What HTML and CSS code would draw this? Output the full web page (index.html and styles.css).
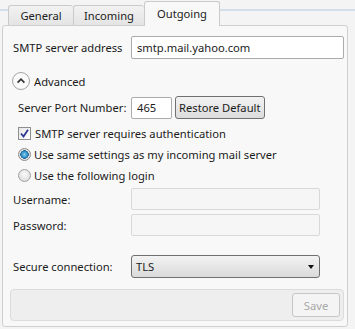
FILE: index.html
```html
<!DOCTYPE html>
<html lang="en">
<head>
    <meta charset="UTF-8">
    <meta name="viewport" content="width=device-width, initial-scale=1.0">
    <title>Outgoing mail settings</title>
    <link rel="stylesheet" href="styles.css">
</head>
<body>
    <div class="tabs">
        <div class="tab general">General</div>
        <div class="tab incoming">Incoming</div>
        <div class="tab active">Outgoing</div>
    </div>
    <div class="panel">
        <div class="row">
            <label class="label">SMTP server address</label>
            <input class="field wide" type="text" value="smtp.mail.yahoo.com">
        </div>

        <div class="advanced">
            <span class="toggle">
                <svg width="18" height="18" viewBox="0 0 18 18">
                    <circle cx="9" cy="9" r="8.5" fill="#fafafa" stroke="#a3a3a3"/>
                    <path d="M5.6 10.6 L9 7.2 L12.4 10.6" fill="none" stroke="#333" stroke-width="1.7"/>
                </svg>
            </span>
            Advanced
        </div>

        <div class="row indent">
            <label class="label">Server Port Number:</label>
            <input class="field port" type="text" value="465">
            <button class="btn">Restore Default</button>
        </div>

        <div class="option">
            <span class="checkbox">
                <svg width="11" height="11" viewBox="0 0 11 11">
                    <path d="M2 5.5 L4.5 8.5 L9 1.8" fill="none" stroke="#2b3990" stroke-width="1.8"/>
                </svg>
            </span>
            SMTP server requires authentication
        </div>
        <div class="option">
            <span class="radio checked"></span>
            Use same settings as my incoming mail server
        </div>
        <div class="option">
            <span class="radio"></span>
            Use the following login
        </div>

        <div class="row login">
            <label class="label">Username:</label>
            <input class="field short" type="text" disabled>
        </div>
        <div class="row login">
            <label class="label">Password:</label>
            <input class="field short" type="password" disabled>
        </div>

        <div class="row secure">
            <label class="label">Secure connection:</label>
            <div class="select">TLS<span class="arrow"></span></div>
        </div>

        <div class="actions">
            <button class="save" disabled>Save</button>
        </div>
    </div>
</body>
</html>
```

FILE: styles.css
```css
body {
    margin: 0;
    width: 355px;
    height: 329px;
    overflow: hidden;
    background-color: #f4f4f4;
    font-family: 'Noto Sans', 'DejaVu Sans', sans-serif;
    font-size: 11.2px;
    color: #1b1b1b;
}
.tabs {
    display: flex;
    align-items: flex-end;
    height: 25px;
    padding-left: 8px;
    background: linear-gradient(to bottom, transparent 9px, #d3dfeb 9px, #d3dfeb 11px, transparent 11px);
}
.tab {
    box-sizing: border-box;
    height: 20px;
    line-height: 20px;
    text-align: center;
    border: 1px solid #cacaca;
    border-bottom: none;
    border-right: none;
    border-radius: 3px 3px 0 0;
    background: linear-gradient(to bottom, #f2f2f2, #e4e4e4);
    color: #222;
    white-space: nowrap;
}
.general {
    width: 65px;
}
.incoming {
    width: 71px;
}
.tab.active {
    position: relative;
    z-index: 1;
    width: 76px;
    height: 25px;
    margin-bottom: -1px;
    line-height: 23px;
    border-right: 1px solid #cacaca;
    background: #f8f8f8;
}
.panel {
    margin-left: 2px;
    width: 331px;
    height: 290px;
    padding: 10px 3px 0 10px;
    border: 1px solid #cfcfcf;
    border-radius: 3px;
    background-color: #f8f8f8;
}
.row {
    display: flex;
    align-items: center;
    height: 23px;
}
.label {
    width: 118px;
    flex-shrink: 0;
    white-space: nowrap;
}
.indent {
    margin-top: 6px;
    padding-left: 5px;
}
.indent .label {
    width: 113px;
}
.field {
    box-sizing: border-box;
    height: 23px;
    padding: 0 5px;
    border: 1px solid #ababab;
    border-radius: 2px;
    background: #fff;
    font-family: inherit;
    font-size: 11.2px;
    color: #1b1b1b;
}
.wide {
    flex: 1;
}
.port {
    width: 41px;
    height: 22px;
}
.btn {
    height: 23px;
    margin-left: 3px;
    padding: 0 3px;
    border: 1px solid #707070;
    border-radius: 3px;
    background: linear-gradient(to bottom, #f3f3f3, #dcdcdc);
    font-family: inherit;
    font-size: 11.2px;
    color: #1b1b1b;
    white-space: nowrap;
}
.advanced {
    display: flex;
    align-items: center;
    gap: 4px;
    margin-top: 13px;
    height: 18px;
}
.toggle {
    display: flex;
    margin-left: -1px;
}
.option {
    display: flex;
    align-items: center;
    gap: 4px;
    height: 21px;
    padding-left: 5px;
    white-space: nowrap;
}
.indent + .option {
    margin-top: 4px;
}
.checkbox {
    display: flex;
    align-items: center;
    justify-content: center;
    box-sizing: border-box;
    width: 13px;
    height: 13px;
    border: 1px solid #8e8f8f;
    background: linear-gradient(135deg, #e6e6e6, #ffffff);
}
.radio {
    box-sizing: border-box;
    width: 13px;
    height: 13px;
    margin-right: -1px;
    border: 1px solid #a2a2a2;
    border-radius: 50%;
    background: radial-gradient(circle at 50% 40%, #fafafa, #d4d4d4);
}
.radio.checked {
    border-color: #8c8c8c;
    background: radial-gradient(circle, #86d3f3 0, #2f8fc7 3px, #1b5f93 4px, #e6e6e6 4.5px, #cfcfcf 100%);
}
.login {
    height: 22px;
}
.option + .login {
    margin-top: 2px;
}
.login + .login {
    margin-top: 4px;
}
.short {
    width: 189px;
    height: 22px;
    border-color: #d8d8d8;
    background: #f6f6f6;
}
.secure {
    margin-top: 19px;
    height: 22px;
}
.select {
    position: relative;
    box-sizing: border-box;
    width: 189px;
    height: 23px;
    padding-left: 4px;
    line-height: 21px;
    border: 1px solid #707070;
    border-radius: 3px;
    background: linear-gradient(to bottom, #f3f3f3, #dadada);
}
.arrow {
    position: absolute;
    right: 5px;
    top: 9px;
    border-left: 3.5px solid transparent;
    border-right: 3.5px solid transparent;
    border-top: 4px solid #111;
}
.actions {
    display: flex;
    justify-content: flex-end;
    box-sizing: border-box;
    height: 32px;
    margin: 12px 0 0 -3px;
    padding: 3px 3px 0 0;
    border: 1px solid #dcdcdc;
    border-radius: 4px;
    background-color: #eeeeee;
}
.save {
    height: 24px;
    width: 48px;
    border: 1px solid #c6c6c6;
    border-radius: 3px;
    background: #f4f4f4;
    font-family: inherit;
    font-size: 11.2px;
    color: #a8a8a8;
}
```
